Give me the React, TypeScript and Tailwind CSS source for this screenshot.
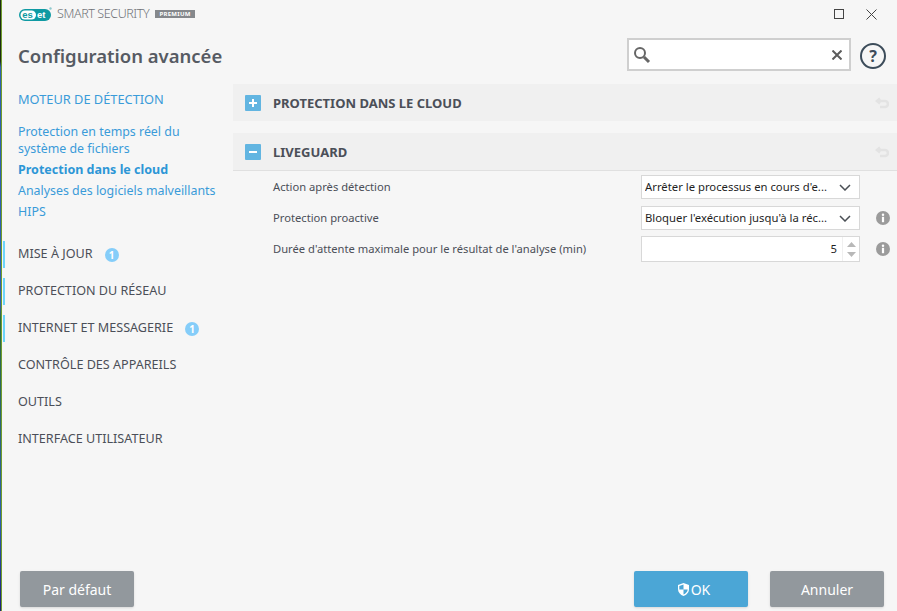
const font = { fontFamily: '"Noto Sans", sans-serif' };

const EsetLogo = () => (
  <svg width="33" height="15" viewBox="0 0 33 15" className="shrink-0">
    <rect x="0" y="2" width="32" height="12" rx="6" fill="#0f9aa3" />
    <rect x="1.500" y="3.500" width="15.500" height="9" rx="4.500" fill="#fff" />
    <text x="3.200" y="11" fontSize="9.500" fontWeight="700" fill="#0f9aa3" fontFamily="Liberation Sans">es</text>
    <text x="18" y="11" fontSize="9.500" fontWeight="700" fill="#fff" fontFamily="Liberation Sans">et</text>
    <circle cx="31.500" cy="1.500" r="1.200" fill="#8fc9cd" />
  </svg>
);

const InfoIcon = () => (
  <svg width="14" height="14" viewBox="0 0 14 14">
    <circle cx="7" cy="7" r="7" fill="#9b9b9b" />
    <rect x="5.900" y="5.800" width="2.200" height="5.400" fill="#fff" />
    <circle cx="7" cy="3.800" r="1.250" fill="#fff" />
  </svg>
);

const Chevron = () => (
  <svg width="12" height="7" viewBox="0 0 12 7" fill="none" stroke="#4a4f55" strokeWidth="1.500" className="shrink-0">
    <path d="M1 1l5 5 5-5" />
  </svg>
);

const Revert = () => (
  <svg width="14" height="12" viewBox="0 0 14 12" fill="none" stroke="#e3e3e3" strokeWidth="2.600">
    <path d="M5 1.500 2 4l3 2.500" />
    <path d="M2.500 4H10a2.600 2.600 0 0 1 0 6H5" />
  </svg>
);

const Badge = () => (
  <span className="ml-3 w-[14px] h-[14px] rounded-full bg-[#85cdf9] text-white text-[10px] font-bold leading-[14px] text-center">1</span>
);

const SectionHead = ({ open, title }: { open: boolean; title: string }) => (
  <div className={`bg-[#f0f0f0] flex items-center pl-3 pr-[8px] ${open ? "h-[38px] border-b border-[#e0e0e0]" : "h-[37px]"}`}>
    <span className="w-4 h-4 bg-[#62b5e1] rounded-[1px] flex items-center justify-center">
      <svg width="10" height="10" viewBox="0 0 10 10" fill="#fff">
        <rect x="1" y="4" width="8" height="2" />
        {!open && <rect x="4" y="1" width="2" height="8" />}
      </svg>
    </span>
    <span className="ml-3 pt-[2px] text-[13px] font-bold text-[#4b4f58]">{title}</span>
    <span className="ml-auto"><Revert /></span>
  </div>
);

const SelectBox = ({ text }: { text: string }) => (
  <div className="w-[219px] h-[24px] bg-white border border-[#d8d8d8] flex items-center pl-[3px] pr-[8px] text-[11.3px] text-[#1f1f1f]">
    <span className="flex-1 whitespace-nowrap overflow-hidden">{text}</span>
    <Chevron />
  </div>
);

const SettingRow = ({ label, info, children }: { label: string; info?: boolean; children: React.ReactNode }) => (
  <div className="flex items-center h-[24px]">
    <span className="w-[408px] pl-[40px] text-[11.2px] text-[#4b4f58] shrink-0 whitespace-nowrap">{label}</span>
    {children}
    <span className="ml-[16px] w-[14px] h-[14px] flex">{info && <InfoIcon />}</span>
  </div>
);

const NavItem = ({ label, bar, badge }: { label: string; bar?: boolean; badge?: boolean }) => (
  <div className={`h-[27px] mb-[10px] flex items-center text-[12.6px] text-[#4b4f58] ${bar ? "border-l-[2px] border-[#6cd4fb] pl-[13px] ml-[1px]" : "pl-[16px]"}`}>
    {label}
    {badge && <Badge />}
  </div>
);

export default function App() {
  return (
    <div className="w-[897px] h-[611px] bg-[#f6f6f6] flex overflow-hidden" style={font}>
      {/* Desktop showing at the window's edge */}
      <div className="w-[2px] shrink-0 flex">
        <div className="w-px bg-[linear-gradient(#1d2a14_0%,#1d2a14_10%,#2f5fb0_11%,#2f5fb0_50%,#2c6a3a_52%,#2f5fb0_85%,#1d1f7a_100%)]" />
        <div className="w-px bg-[#6f9d2c]" />
      </div>

      <div className="flex-1 min-w-0 flex flex-col">
        {/* Title bar */}
        <div className="h-[28px] flex items-center pl-[17px] pr-[20px] shrink-0">
          <EsetLogo />
          <span className="ml-[5px] text-[12.5px] font-light tracking-[-0.4px] text-[#6f7277]">SMART SECURITY</span>
          <span className="ml-[6px] h-[8px] px-[4px] bg-[#85888c] text-white text-[6px] font-bold leading-[8px] tracking-[0.3px]">PREMIUM</span>
          <svg width="10" height="10" viewBox="0 0 10 10" fill="none" stroke="#444" className="ml-auto">
            <rect x="0.500" y="0.500" width="9" height="9" />
          </svg>
          <svg width="11" height="11" viewBox="0 0 11 11" fill="none" stroke="#444" className="ml-[22px]">
            <path d="M0.500 0.500l10 10M10.500 0.500l-10 10" />
          </svg>
        </div>

        {/* Header */}
        <div className="h-[56px] flex items-start justify-between pl-[16px] pr-[11px] shrink-0">
          <h1 className="pt-[15px] text-[18.5px] leading-[26px] font-semibold text-[#565b63]">Configuration avancée</h1>
          <div className="pt-[10px] flex items-start gap-[9px]">
            <div className="w-[224px] h-[33px] bg-white border-[2px] border-[#cfcfcf] flex items-center justify-between pl-[4px] pr-[7px]">
              <svg width="18" height="18" viewBox="0 0 18 18" fill="none" stroke="#666">
                <circle cx="7" cy="7" r="5" strokeWidth="2" />
                <path d="M11 11l5 5" strokeWidth="3" />
              </svg>
              <svg width="10" height="10" viewBox="0 0 10 10" fill="none" stroke="#5c5c5c" strokeWidth="2">
                <path d="M0.500 0.500l9 9M9.500 0.500l-9 9" />
              </svg>
            </div>
            <div className="mt-[5px] w-[26px] h-[26px] rounded-full border-[2px] border-[#3c4c5a] text-[#3c4c5a] text-[16px] font-bold leading-[22px] text-center">?</div>
          </div>
        </div>

        {/* Body */}
        <div className="flex-1 flex min-h-0">
          <nav className="w-[231px] shrink-0">
            <div className="pl-[16px] text-[12.8px] text-[#3a9bd9] pt-[6px] h-[39px]">MOTEUR DE DÉTECTION</div>
            <div className="pl-[16px] text-[12.4px] text-[#3a9bd9] leading-[17px]">
              <div>Protection en temps réel du<br />système de fichiers</div>
              <div className="mt-[4px] font-bold text-[#2d96d6] text-[12.5px]">Protection dans le cloud</div>
              <div className="mt-[4px]">Analyses des logiciels malveillants</div>
              <div className="mt-[4px]">HIPS</div>
            </div>
            <div className="mt-[21px]">
              <NavItem label="MISE À JOUR" bar badge />
              <NavItem label="PROTECTION DU RÉSEAU" bar />
              <NavItem label="INTERNET ET MESSAGERIE" bar badge />
              <NavItem label="CONTRÔLE DES APPAREILS" />
              <NavItem label="OUTILS" />
              <NavItem label="INTERFACE UTILISATEUR" />
            </div>
          </nav>

          <main className="flex-1 flex flex-col">
            <SectionHead open={false} title="PROTECTION DANS LE CLOUD" />
            <div className="mt-[12px]">
              <SectionHead open title="LIVEGUARD" />
            </div>
            <div className="mt-[4px] flex flex-col gap-[7px]">
              <SettingRow label="Action après détection">
                <SelectBox text="Arrêter le processus en cours d'e..." />
              </SettingRow>
              <SettingRow label="Protection proactive" info>
                <SelectBox text="Bloquer l'exécution jusqu'à la réc..." />
              </SettingRow>
              <SettingRow label="Durée d'attente maximale pour le résultat de l'analyse (min)" info>
                <div className="w-[219px] h-[26px] bg-white border border-[#d8d8d8] flex items-center justify-end text-[11.3px] text-[#1f1f1f]">
                  <span className="pr-[5px]">5</span>
                  <div className="w-[17px] h-full border-l border-[#f0f0f0] flex flex-col items-center justify-center gap-[5px]">
                    <svg width="9" height="5" viewBox="0 0 9 5" fill="#b8b8b8"><path d="M4.500 0L9 5H0z" /></svg>
                    <svg width="9" height="5" viewBox="0 0 9 5" fill="#b8b8b8"><path d="M0 0h9L4.500 5z" /></svg>
                  </div>
                </div>
              </SettingRow>
            </div>
          </main>
        </div>

        {/* Footer */}
        <div className="h-[40px] flex items-start pl-[18px] pr-[13px] shrink-0 text-[14px] text-white">
          <button className="w-[114px] h-[36px] bg-[#92989d] rounded-[2px] shadow-sm">Par défaut</button>
          <button className="ml-auto w-[114px] h-[36px] pl-[6px] bg-[#4ba6d6] rounded-[2px] shadow-sm flex items-center justify-center gap-[2px]">
            <svg width="11" height="13" viewBox="0 0 11 13">
              <path d="M5.500 0L11 2v4c0 3.500-2.400 5.800-5.500 7C2.400 11.800 0 9.500 0 6V2z" fill="#fff" />
              <path d="M5.500 1.500V6.500H1.300V3zM5.500 6.500h4.200c-.2 2.500-2 4-4.200 5z" fill="#4ba6d6" />
            </svg>
            OK
          </button>
          <button className="ml-[22px] w-[114px] h-[36px] bg-[#92989d] rounded-[2px] shadow-sm">Annuler</button>
        </div>
      </div>
    </div>
  );
}
